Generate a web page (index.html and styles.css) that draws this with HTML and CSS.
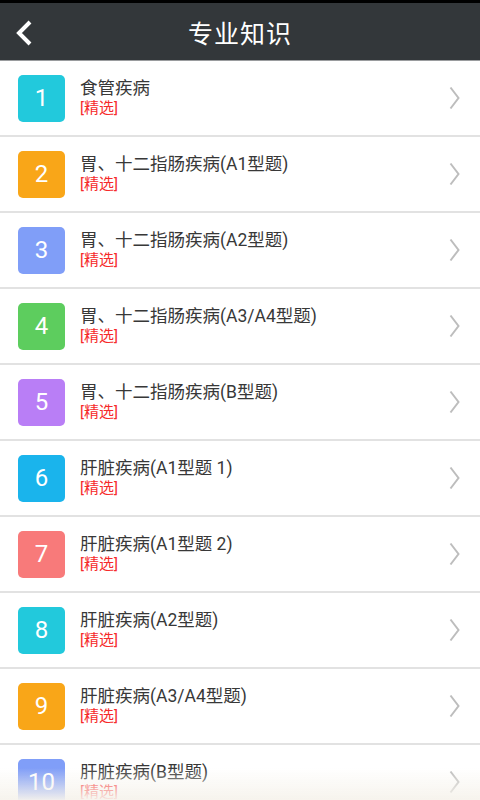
FILE: index.html
```html
<!DOCTYPE html>
<html lang="zh-CN">

<head>
    <meta charset="UTF-8">
    <meta name="viewport" content="width=device-width, initial-scale=1.0">
    <title>专业知识</title>
    <link rel="stylesheet" href="styles.css">
</head>

<body>
    <div class="status"></div>
    <div class="topbar">
        <a href="#" class="back">
            <svg width="18" height="26" viewBox="0 0 18 26"><path d="M15 2 L4 13 L15 24" fill="none" stroke="#fff" stroke-width="4"/></svg>
        </a>
        <h1>专业知识</h1>
    </div>

    <ul class="list">
        <li class="item">
            <span class="num c-cyan">1</span>
            <div class="txt"><div class="name">食管疾病</div><div class="tag">[精选]</div></div>
            <svg class="arrow" width="11" height="24" viewBox="0 0 11 24"><path d="M1.5 1.5 L9.5 12 L1.5 22.5" fill="none" stroke="#bdbdbd" stroke-width="2"/></svg>
        </li>
        <li class="item">
            <span class="num c-orange">2</span>
            <div class="txt"><div class="name">胃、十二指肠疾病(A1型题)</div><div class="tag">[精选]</div></div>
            <svg class="arrow" width="11" height="24" viewBox="0 0 11 24"><path d="M1.5 1.5 L9.5 12 L1.5 22.5" fill="none" stroke="#bdbdbd" stroke-width="2"/></svg>
        </li>
        <li class="item">
            <span class="num c-blue">3</span>
            <div class="txt"><div class="name">胃、十二指肠疾病(A2型题)</div><div class="tag">[精选]</div></div>
            <svg class="arrow" width="11" height="24" viewBox="0 0 11 24"><path d="M1.5 1.5 L9.5 12 L1.5 22.5" fill="none" stroke="#bdbdbd" stroke-width="2"/></svg>
        </li>
        <li class="item">
            <span class="num c-green">4</span>
            <div class="txt"><div class="name">胃、十二指肠疾病(A3/A4型题)</div><div class="tag">[精选]</div></div>
            <svg class="arrow" width="11" height="24" viewBox="0 0 11 24"><path d="M1.5 1.5 L9.5 12 L1.5 22.5" fill="none" stroke="#bdbdbd" stroke-width="2"/></svg>
        </li>
        <li class="item">
            <span class="num c-purple">5</span>
            <div class="txt"><div class="name">胃、十二指肠疾病(B型题)</div><div class="tag">[精选]</div></div>
            <svg class="arrow" width="11" height="24" viewBox="0 0 11 24"><path d="M1.5 1.5 L9.5 12 L1.5 22.5" fill="none" stroke="#bdbdbd" stroke-width="2"/></svg>
        </li>
        <li class="item">
            <span class="num c-sky">6</span>
            <div class="txt"><div class="name">肝脏疾病(A1型题 1)</div><div class="tag">[精选]</div></div>
            <svg class="arrow" width="11" height="24" viewBox="0 0 11 24"><path d="M1.5 1.5 L9.5 12 L1.5 22.5" fill="none" stroke="#bdbdbd" stroke-width="2"/></svg>
        </li>
        <li class="item">
            <span class="num c-red">7</span>
            <div class="txt"><div class="name">肝脏疾病(A1型题 2)</div><div class="tag">[精选]</div></div>
            <svg class="arrow" width="11" height="24" viewBox="0 0 11 24"><path d="M1.5 1.5 L9.5 12 L1.5 22.5" fill="none" stroke="#bdbdbd" stroke-width="2"/></svg>
        </li>
        <li class="item">
            <span class="num c-cyan">8</span>
            <div class="txt"><div class="name">肝脏疾病(A2型题)</div><div class="tag">[精选]</div></div>
            <svg class="arrow" width="11" height="24" viewBox="0 0 11 24"><path d="M1.5 1.5 L9.5 12 L1.5 22.5" fill="none" stroke="#bdbdbd" stroke-width="2"/></svg>
        </li>
        <li class="item">
            <span class="num c-orange">9</span>
            <div class="txt"><div class="name">肝脏疾病(A3/A4型题)</div><div class="tag">[精选]</div></div>
            <svg class="arrow" width="11" height="24" viewBox="0 0 11 24"><path d="M1.5 1.5 L9.5 12 L1.5 22.5" fill="none" stroke="#bdbdbd" stroke-width="2"/></svg>
        </li>
        <li class="item">
            <span class="num c-blue">10</span>
            <div class="txt"><div class="name">肝脏疾病(B型题)</div><div class="tag">[精选]</div></div>
            <svg class="arrow" width="11" height="24" viewBox="0 0 11 24"><path d="M1.5 1.5 L9.5 12 L1.5 22.5" fill="none" stroke="#bdbdbd" stroke-width="2"/></svg>
        </li>
    </ul>

    <!-- 下の方がうすく消える -->
    <div class="fade"></div>
</body>

</html>
```

FILE: styles.css
```css
body {
    margin: 0;
    font-family: Roboto, 'Noto Sans CJK SC', sans-serif;
    background-color: #fff;
    height: 800px;
    overflow: hidden;
}

.status {
    height: 3px;
    background-color: #000;
}

.topbar {
    position: relative;
    height: 57px;
    background-color: #33373a;
    border-bottom: solid 1px #9a9c9e;
    display: flex;
    align-items: center;
    justify-content: center;
}

.topbar h1 {
    margin: 0;
    color: #fff;
    font-size: 25px;
    font-weight: 400;
    letter-spacing: 1px;
}

.back {
    position: absolute;
    left: 15px;
    top: 17px;
    display: block;
}

.list {
    list-style: none;
    margin: 0;
    padding: 0;
}

.item {
    display: flex;
    align-items: center;
    height: 74px;
    border-bottom: solid 2px #e2e2e2;
    padding-left: 18px;
}

.num {
    width: 47px;
    height: 47px;
    border-radius: 5px;
    color: #fff;
    font-size: 24px;
    display: flex;
    align-items: center;
    justify-content: center;
    flex-shrink: 0;
}

.c-cyan { background-color: #22c9dc; }
.c-orange { background-color: #f9a618; }
.c-blue { background-color: #809ef8; }
.c-green { background-color: #5dcd5e; }
.c-purple { background-color: #b97ef6; }
.c-sky { background-color: #1ab4ec; }
.c-red { background-color: #f87a7a; }

.txt {
    flex: 1;
    margin-left: 15px;
    margin-top: -2px;
}

.name {
    font-size: 17.5px;
    color: #383838;
    line-height: 21px;
}

.tag {
    font-size: 15px;
    color: #f62a2a;
    line-height: 18px;
}

.arrow {
    margin-right: 20px;
    flex-shrink: 0;
}

.fade {
    position: fixed;
    left: 0;
    right: 0;
    bottom: 0;
    height: 32px;
    background: linear-gradient(rgba(246, 243, 236, 0), rgba(246, 243, 236, 0.95));
    pointer-events: none;
}
```
